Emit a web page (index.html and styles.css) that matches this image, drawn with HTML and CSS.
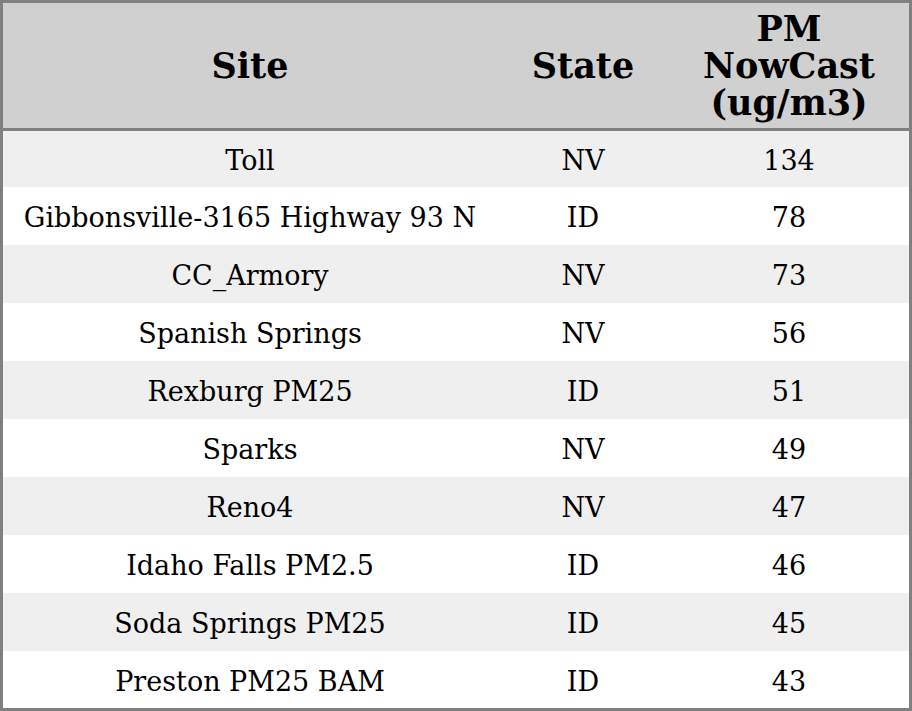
FILE: index.html
```html
<!DOCTYPE html>
<html>
<head>
<meta charset="utf-8">
<link rel="stylesheet" href="styles.css">
</head>
<body>
<table class="tbl">
<thead>
<tr><th class="c-site">Site</th><th class="c-state">State</th><th class="c-pm">PM<br>NowCast<br>(ug/m3)</th></tr>
</thead>
<tbody>
<tr><td>Toll</td><td>NV</td><td>134</td></tr>
<tr><td>Gibbonsville-3165 Highway 93 N</td><td>ID</td><td>78</td></tr>
<tr><td>CC_Armory</td><td>NV</td><td>73</td></tr>
<tr><td>Spanish Springs</td><td>NV</td><td>56</td></tr>
<tr><td>Rexburg PM25</td><td>ID</td><td>51</td></tr>
<tr><td>Sparks</td><td>NV</td><td>49</td></tr>
<tr><td>Reno4</td><td>NV</td><td>47</td></tr>
<tr><td>Idaho Falls PM2.5</td><td>ID</td><td>46</td></tr>
<tr><td>Soda Springs PM25</td><td>ID</td><td>45</td></tr>
<tr><td>Preston PM25 BAM</td><td>ID</td><td>43</td></tr>
</tbody>
</table>
</body>
</html>
```
FILE: styles.css
```css
html, body { margin: 0; padding: 0; background: #fff; }
.tbl {
  width: 912px;
  border-collapse: collapse;
  border: 3px solid #808080;
  font-family: "DejaVu Serif", serif;
  color: #000;
  table-layout: fixed;
}
.tbl th {
  background: #d0d0d0;
  font-size: 35px;
  font-weight: bold;
  line-height: 37px;
  height: 125px;
  padding: 0;
  text-align: center;
  vertical-align: middle;
  border-bottom: 3px solid #808080;
}
.c-site { width: 494px; }
.c-state { width: 172px; }
.tbl td {
  font-size: 27px;
  line-height: 32px;
  height: 54px;
  padding: 4px 0 0;
  text-align: center;
  vertical-align: middle;
}
.tbl tbody tr:first-child td { height: 52px; }
.tbl tbody tr:last-child td { height: 53px; }
.tbl tbody tr:nth-child(odd) td { background: #efefef; }
```
